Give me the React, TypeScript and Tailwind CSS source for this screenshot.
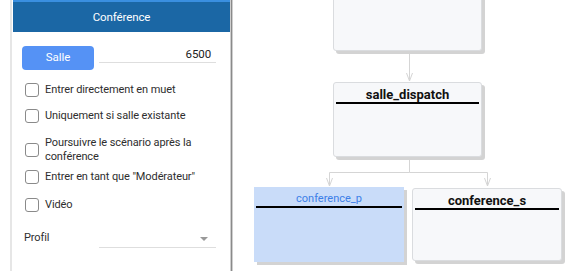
import React from 'react';

const options: { label: string[]; mt: string }[] = [
  { label: ['Entrer directement en muet'], mt: 'mt-[13px]' },
  { label: ['Uniquement si salle existante'], mt: 'mt-[12px]' },
  { label: ['Poursuivre le scénario après la', 'conférence'], mt: 'mt-[13px]' },
  { label: ['Entrer en tant que "Modérateur"'], mt: 'mt-[6px]' },
  { label: ['Vidéo'], mt: 'mt-[14px]' },
];

const Node: React.FC<{ title: string; className: string; selected?: boolean }> = ({ title, className, selected }) => (
  <div
    className={
      'absolute shadow-[3px_3px_0_#d3d3d3] ' +
      (selected ? 'bg-[#c9dcf9] ' : 'bg-[#f7f8fa] border border-[#dadcdf] rounded-[3px] ') +
      className
    }
  >
    <div
      className={
        'mx-[2px] mt-[4px] h-[17px] border-b-2 border-black text-center leading-[15px] ' +
        (selected ? 'text-[11px] text-[#3c7fe8]' : 'text-[13px] font-bold text-[#111]')
      }
    >
      {title}
    </div>
  </div>
);

const Connectors: React.FC = () => (
  <svg className="absolute inset-0" width="338" height="271" fill="none" stroke="#d5d5d5" strokeWidth="1">
    {/* node1 -> salle_dispatch */}
    <path d="M176.5 52V81" />
    <path d="M173.5 73L176.5 81L179.5 73" />
    {/* salle_dispatch -> children */}
    <path d="M176.5 158V172.5H96.5V186M176.5 172.5H254.5V186" />
    <path d="M93.5 178L96.5 186L99.5 178" />
    <path d="M251.5 178L254.5 186L257.5 178" />
  </svg>
);

export default function App() {
  return (
    <div className="flex h-[271px] w-[571px] overflow-hidden bg-white font-['Roboto','Liberation_Sans',Arial,sans-serif] text-[11px] tracking-[-0.1px] text-[#2e2e2e]">
      <div className="w-[10px] shrink-0" />
      <div className="w-[2px] shrink-0 bg-[#e6e6e6]" />
      <div className="w-[1px] shrink-0" />

      {/* Side panel */}
      <div className="flex w-[217px] shrink-0 flex-col">
        <div className="h-[32px] border-t-2 border-[#3a8fe0] bg-[#1b67a5] text-center text-[11.5px] leading-[30px] text-white">
          Conférence
        </div>

        <div className="mt-[14px] flex items-start pl-[9px]">
          <button className="h-[24px] w-[72px] rounded-[4px] bg-[#5592f5] text-[11.5px] text-white">Salle</button>
          <div className="ml-[5px] h-[17px] w-[117px] border-b border-[#dedede] pr-[5px] text-right text-[11.5px] leading-[17px] text-[#222]">
            6500
          </div>
        </div>

        {options.map((o) => (
          <label key={o.label[0]} className={'flex items-center pl-[12px] ' + o.mt}>
            <span className="h-[14px] w-[14px] shrink-0 rounded-[3px] border border-[#8a8a8a] bg-white" />
            <span className="ml-[6px] leading-[14px]">
              {o.label.map((l) => (
                <span key={l} className="block">
                  {l}
                </span>
              ))}
            </span>
          </label>
        ))}

        <div className="mt-[19px] flex items-start pl-[11px]">
          <span className="w-[75px] leading-[14px]">Profil</span>
          <div className="relative h-[17px] w-[117px] border-b border-[#dedede]">
            <span className="absolute right-[8px] top-[6px] h-0 w-0 border-x-[4px] border-t-[4px] border-x-transparent border-t-[#999]" />
          </div>
        </div>
      </div>

      {/* Divider */}
      <div className="w-[3px] shrink-0 border-x border-[#cfcfcf] bg-[#8a8a8a]" />

      {/* Diagram canvas */}
      <div className="relative flex-1 overflow-hidden tracking-normal">
        <Connectors />
        <div className="absolute left-[100px] top-[-40px] h-[91px] w-[149px] rounded-[3px] border border-[#dadcdf] bg-[#f7f8fa] shadow-[3px_3px_0_#d3d3d3]" />
        <Node title="salle_dispatch" className="left-[100px] top-[82px] h-[75px] w-[149px]" />
        <Node title="conference_p" selected className="left-[21px] top-[187px] h-[75px] w-[150px]" />
        <Node title="conference_s" className="left-[179px] top-[188px] h-[73px] w-[150px]" />
      </div>
    </div>
  );
}
